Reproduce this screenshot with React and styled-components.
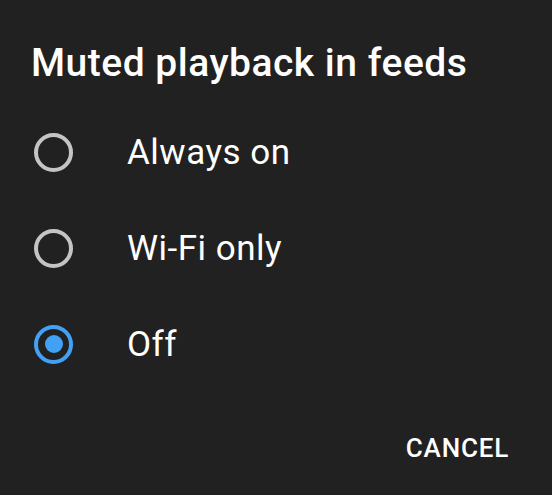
import React, { useState } from 'react';
import styled, { createGlobalStyle } from 'styled-components';

const Global = createGlobalStyle`
  html, body {
    margin: 0;
    padding: 0;
    background: #212121;
  }
  body {
    font-family: Roboto, "Noto Sans", sans-serif;
    -webkit-font-smoothing: antialiased;
  }
`;

const Dialog = styled.div`
  width: 552px;
  height: 495px;
  box-sizing: border-box;
  background: #212121;
  padding-top: 41px;
  display: flex;
  flex-direction: column;
`;

const Title = styled.h1`
  margin: 0 0 19px 0;
  padding-left: 31px;
  font-size: 39px;
  line-height: 44px;
  font-weight: 500;
  letter-spacing: 0.5px;
  color: #ffffff;
`;

const Options = styled.div`
  display: flex;
  flex-direction: column;
`;

const Row = styled.label`
  height: 96px;
  display: flex;
  align-items: center;
  padding-left: 34px;
  gap: 54px;
  cursor: pointer;
`;

const Radio = styled.span`
  width: 39px;
  height: 39px;
  box-sizing: border-box;
  border-radius: 50%;
  border: 4px solid ${p => (p.$on ? '#42a1f4' : '#c4c4c4')};
  display: flex;
  align-items: center;
  justify-content: center;
  flex-shrink: 0;

  &::after {
    content: '';
    width: 18px;
    height: 18px;
    border-radius: 50%;
    background: #42a1f4;
    display: ${p => (p.$on ? 'block' : 'none')};
  }
`;

const Label = styled.span`
  font-size: 35px;
  font-weight: 400;
  letter-spacing: 0.5px;
  color: #ffffff;
`;

const Footer = styled.div`
  display: flex;
  justify-content: flex-end;
  padding-right: 35px;
  margin-top: 32px;
`;

const TextButton = styled.button`
  background: none;
  border: none;
  height: 48px;
  padding: 0 8px;
  font-family: Roboto, sans-serif;
  font-size: 26px;
  font-weight: 500;
  letter-spacing: 0.8px;
  color: #ffffff;
  cursor: pointer;
`;

const choices = ['Always on', 'Wi-Fi only', 'Off'];

export default function App() {
  const [value, setValue] = useState('Off');

  return (
    <>
      <Global />
      <Dialog>
        <Title>Muted playback in feeds</Title>
        <Options>
          {choices.map(c => (
            <Row key={c} onClick={() => setValue(c)}>
              <Radio $on={value === c} />
              <Label>{c}</Label>
            </Row>
          ))}
        </Options>
        <Footer>
          <TextButton>CANCEL</TextButton>
        </Footer>
      </Dialog>
    </>
  );
}
